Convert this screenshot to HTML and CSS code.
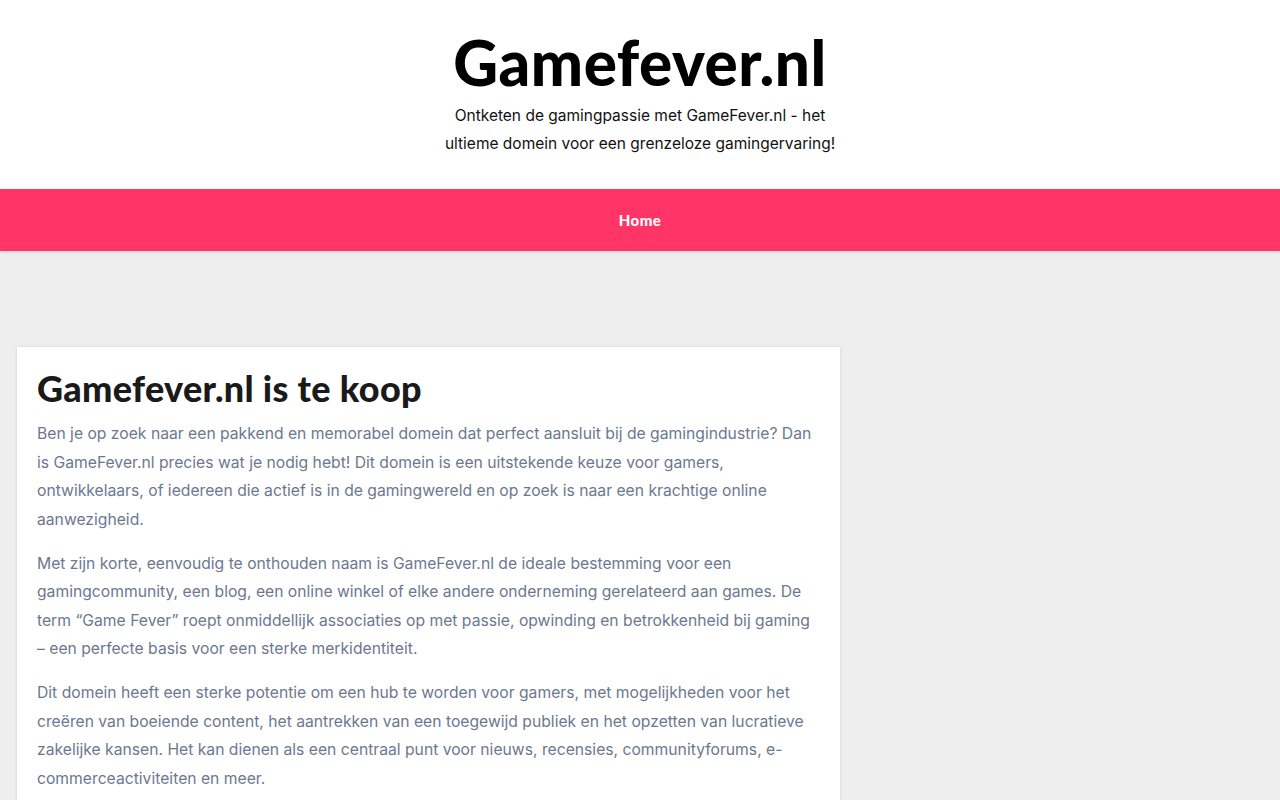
FILE: index.html
```html
<!DOCTYPE html>
<html lang="nl">
<head>
<meta charset="utf-8">
<title>Gamefever.nl</title>
<link rel="stylesheet" href="styles.css">
</head>
<body>
<header class="site-header">
  <h1 class="site-title">Gamefever.nl</h1>
  <p class="site-tagline">Ontketen de gamingpassie met GameFever.nl - het ultieme domein voor een grenzeloze gamingervaring!</p>
</header>
<nav class="main-nav">
  <a class="nav-link" href="#">Home</a>
</nav>
<main class="content">
  <article class="card">
    <h2 class="card-title">Gamefever.nl is te koop</h2>
    <p class="card-text">Ben je op zoek naar een pakkend en memorabel domein dat perfect aansluit bij de gamingindustrie? Dan is GameFever.nl precies wat je nodig hebt! Dit domein is een uitstekende keuze voor gamers, ontwikkelaars, of iedereen die actief is in de gamingwereld en op zoek is naar een krachtige online aanwezigheid.</p>
    <p class="card-text">Met zijn korte, eenvoudig te onthouden naam is GameFever.nl de ideale bestemming voor een gamingcommunity, een blog, een online winkel of elke andere onderneming gerelateerd aan games. De term “Game Fever” roept onmiddellijk associaties op met passie, opwinding en betrokkenheid bij gaming – een perfecte basis voor een sterke merkidentiteit.</p>
    <p class="card-text">Dit domein heeft een sterke potentie om een hub te worden voor gamers, met mogelijkheden voor het creëren van boeiende content, het aantrekken van een toegewijd publiek en het opzetten van lucratieve zakelijke kansen. Het kan dienen als een centraal punt voor nieuws, recensies, communityforums, e-commerceactiviteiten en meer.</p>
  </article>
  <aside class="sidebar"></aside>
</main>
</body>
</html>
```
FILE: styles.css
```css
html, body {
  margin: 0;
  padding: 0;
}
body {
  background: #eeeeee;
  font-family: "Inter", "Open Sans", sans-serif;
}
.site-header {
  background: #ffffff;
  text-align: center;
  padding: 26px 0 31px;
}
.site-title {
  margin: 0;
  font-family: "Lato", sans-serif;
  font-weight: 900;
  font-size: 62px;
  line-height: 72px;
  color: #000000;
  letter-spacing: 0.5px;
}
.site-tagline {
  margin: 4px auto 0;
  max-width: 400px;
  font-size: 15.5px;
  line-height: 28px;
  color: #111111;
}
.main-nav {
  background: #ff3568;
  height: 62px;
  display: flex;
  align-items: center;
  justify-content: center;
  box-shadow: 0 1px 3px rgba(0,0,0,0.15);
  position: relative;
}
.nav-link {
  color: #ffffff;
  text-decoration: none;
  font-family: "Lato", sans-serif;
  font-weight: 900;
  font-size: 15px;
  letter-spacing: 0.5px;
  margin-top: -1px;
}
.content {
  display: grid;
  grid-template-columns: 823px 1fr;
  padding: 96px 17px 0;
}
.card {
  background: #ffffff;
  padding: 20px 20px 10px;
  box-shadow: 0 0 3px rgba(0,0,0,0.12);
}
.card-title {
  margin: 0 0 11px;
  font-family: "Lato", sans-serif;
  font-weight: 900;
  font-size: 36px;
  line-height: 42px;
  letter-spacing: 0.3px;
  color: #1a1a1a;
}
.card-text {
  margin: 0 0 15.5px;
  font-size: 15.7px;
  line-height: 28.5px;
  color: #6b7890;
}
```
